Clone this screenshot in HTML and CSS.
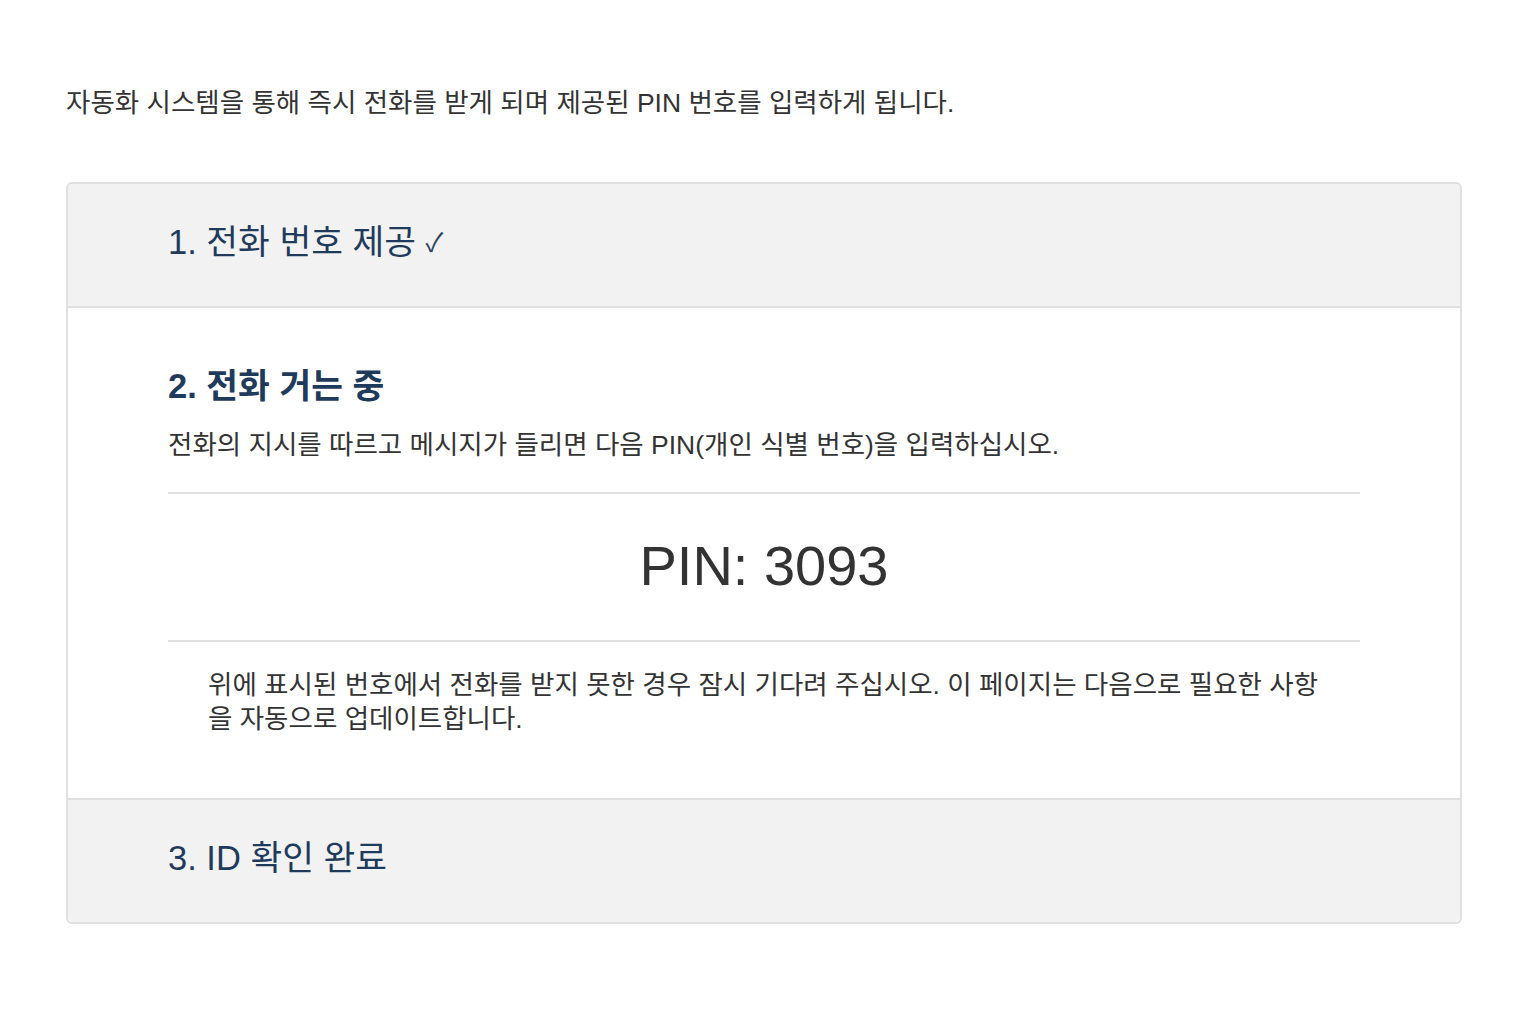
FILE: index.html
```html
<!DOCTYPE html>
<html lang="ko">
<head>
<meta charset="utf-8">
<title>전화 인증</title>
<link rel="stylesheet" href="styles.css">
</head>
<body>
<main class="page">
  <p class="intro">자동화 시스템을 통해 즉시 전화를 받게 되며 제공된 PIN 번호를 입력하게 됩니다.</p>
  <section class="steps">
    <div class="step step-done">
      <h2 class="step-title">1. 전화 번호 제공 <span class="check">✓</span></h2>
    </div>
    <div class="step step-active">
      <h2 class="step-title step-title-bold">2. 전화 거는 중</h2>
      <p class="step-desc">전화의 지시를 따르고 메시지가 들리면 다음 PIN(개인 식별 번호)을 입력하십시오.</p>
      <div class="pin-box">
        <div class="pin">PIN: 3093</div>
      </div>
      <p class="note">위에 표시된 번호에서 전화를 받지 못한 경우 잠시 기다려 주십시오. 이 페이지는 다음으로 필요한 사항을 자동으로 업데이트합니다.</p>
    </div>
    <div class="step step-pending">
      <h2 class="step-title">3. ID 확인 완료</h2>
    </div>
  </section>
</main>
</body>
</html>
```

FILE: styles.css
```css
* { box-sizing: border-box; }
html, body { margin: 0; padding: 0; background: #fff; }
body {
  font-family: "Liberation Sans", Arial, "Noto Sans CJK KR", sans-serif;
  color: #333;
}
.page {
  padding: 86px 70px 0 66px;
}
.intro {
  margin: 0 0 62px;
  font-size: 26.5px;
  line-height: 34px;
  color: #333;
}
.steps {
  border: 2px solid #e0e0e0;
  border-radius: 6px;
  overflow: hidden;
}
.step {
  padding: 38px 100px 44px;
}
.step + .step { border-top: 2px solid #e0e0e0; }
.step-done, .step-pending { background: #f2f2f2; }
.step-active { background: #fff; padding: 58px 100px 62px; }
.step-title {
  margin: 0;
  font-size: 34.5px;
  line-height: 40px;
  font-weight: normal;
  color: #1f3b5c;
}
.step-title-bold { font-weight: bold; }
.check {
  font-size: 26px;
  line-height: 1;
  vertical-align: 2px;
  color: #2a4461;
}
.step-desc {
  margin: 22px 0 30px;
  font-size: 26.5px;
  line-height: 34px;
  color: #333;
}
.pin-box {
  border-top: 2px solid #e0e0e0;
  border-bottom: 2px solid #e0e0e0;
  padding: 40px 0 42px;
  text-align: center;
}
.pin {
  font-size: 56px;
  line-height: 64px;
  color: #333;
}
.note {
  margin: 26px 40px 0;
  font-size: 26.5px;
  line-height: 34px;
  color: #333;
}
```
